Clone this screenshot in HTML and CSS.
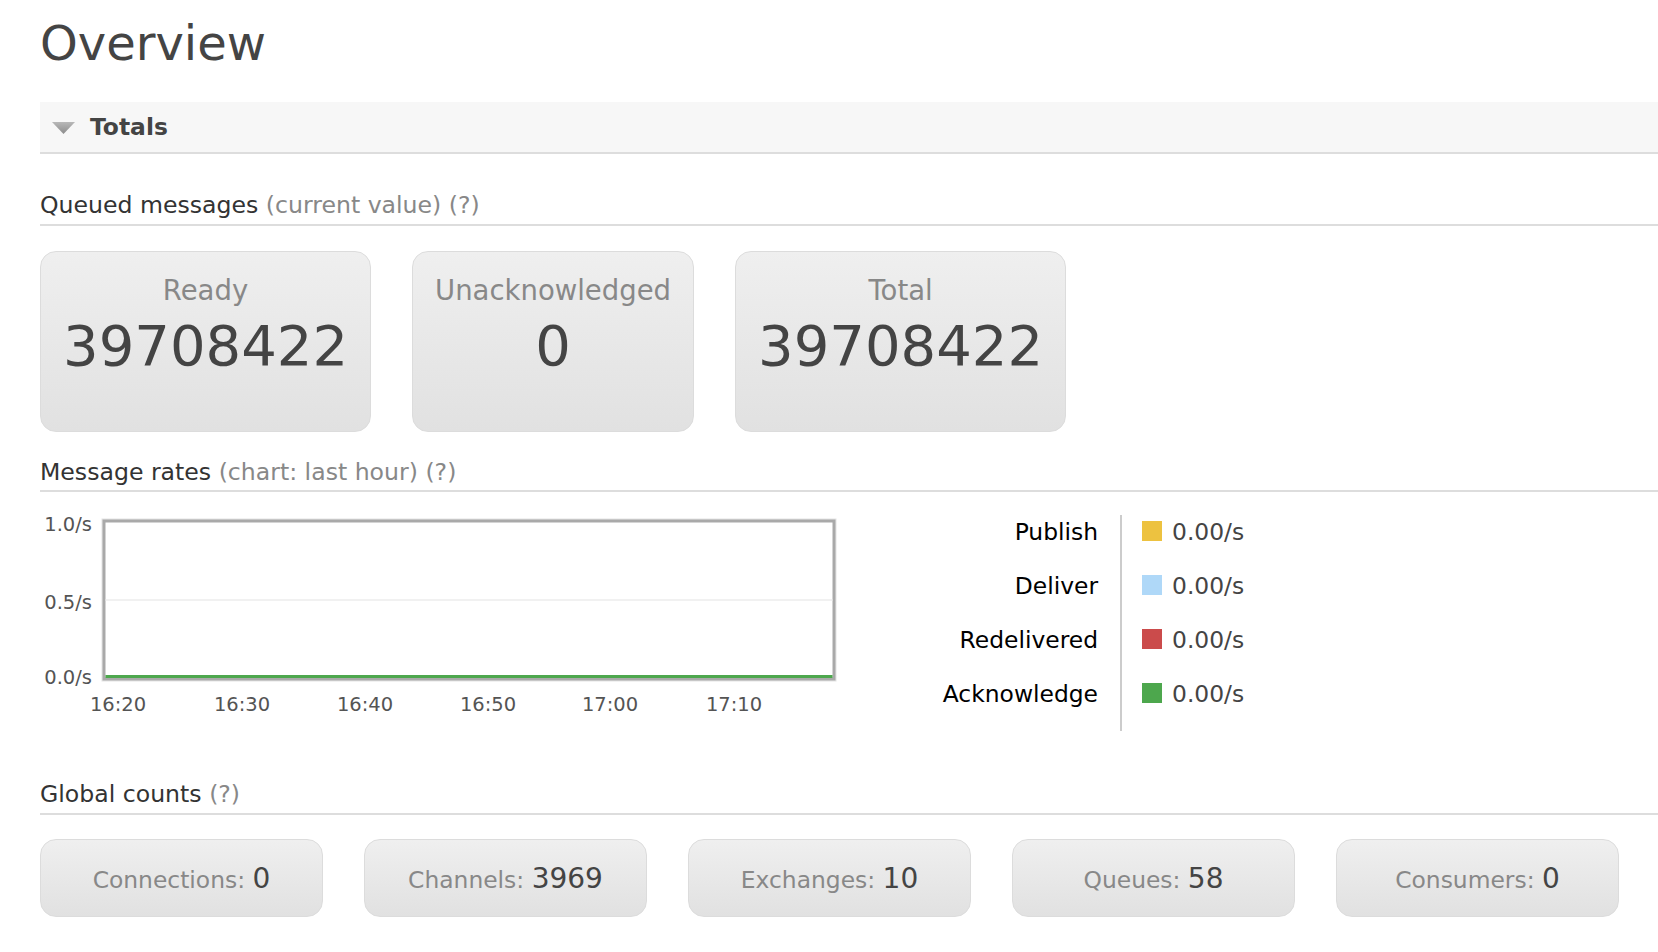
FILE: index.html
```html
<!DOCTYPE html>
<html lang="en">
<head>
<meta charset="utf-8">
<title>Overview</title>
<link rel="stylesheet" href="styles.css">
</head>
<body>
<div class="page">
  <h1 class="title">Overview</h1>
  <div class="section">
    <div class="section-bar">
      <svg class="toggle" width="23" height="12" viewBox="0 0 23 12" aria-hidden="true">
        <defs>
          <linearGradient id="tg" x1="0" y1="0" x2="0" y2="1">
            <stop offset="0" stop-color="#b8b8b8"/>
            <stop offset="1" stop-color="#8c8c8c"/>
          </linearGradient>
        </defs>
        <polygon points="0,0 23,0 11.5,12" fill="url(#tg)"/>
      </svg>
      <h2 class="section-title">Totals</h2>
    </div>

    <h3 class="sub">Queued messages <span class="muted">(current value) (?)</span></h3>
    <div class="highlights">
      <div class="hl"><span class="hl-label">Ready</span><strong class="hl-num">39708422</strong></div>
      <div class="hl"><span class="hl-label">Unacknowledged</span><strong class="hl-num">0</strong></div>
      <div class="hl"><span class="hl-label">Total</span><strong class="hl-num">39708422</strong></div>
    </div>

    <h3 class="sub sub-rates">Message rates <span class="muted">(chart: last hour) (?)</span></h3>
    <div class="rates">
      <svg class="chart" width="800" height="215" viewBox="0 0 800 215">
        <rect x="64" y="17" width="730" height="158" fill="#fff" stroke="#e4e4e4" stroke-width="5"/>
        <rect x="64" y="17" width="730" height="158" fill="#fff" stroke="#a9a9a9" stroke-width="3"/>
        <line x1="65.5" y1="96" x2="792.5" y2="96" class="grid"/>
        <line x1="65.5" y1="172.5" x2="792.5" y2="172.5" class="series"/>
        <g class="ylabels">
          <text x="52" y="27">1.0/s</text>
          <text x="52" y="105">0.5/s</text>
          <text x="52" y="180">0.0/s</text>
        </g>
        <g class="xlabels">
          <text x="78" y="207">16:20</text>
          <text x="202" y="207">16:30</text>
          <text x="325" y="207">16:40</text>
          <text x="448" y="207">16:50</text>
          <text x="570" y="207">17:00</text>
          <text x="694" y="207">17:10</text>
        </g>
      </svg>
      <div class="legend">
        <div class="legend-label">Publish</div>
        <div class="legend-value"><span class="swatch swatch-publish"></span>0.00/s</div>
        <div class="legend-label">Deliver</div>
        <div class="legend-value"><span class="swatch swatch-deliver"></span>0.00/s</div>
        <div class="legend-label">Redelivered</div>
        <div class="legend-value"><span class="swatch swatch-redeliver"></span>0.00/s</div>
        <div class="legend-label">Acknowledge</div>
        <div class="legend-value"><span class="swatch swatch-ack"></span>0.00/s</div>
      </div>
    </div>

    <h3 class="sub sub-global">Global counts <span class="muted">(?)</span></h3>
    <div class="counts">
      <div class="count"><span class="count-text">Connections: <strong class="count-num">0</strong></span></div>
      <div class="count"><span class="count-text">Channels: <strong class="count-num">3969</strong></span></div>
      <div class="count"><span class="count-text">Exchanges: <strong class="count-num">10</strong></span></div>
      <div class="count"><span class="count-text">Queues: <strong class="count-num">58</strong></span></div>
      <div class="count"><span class="count-text">Consumers: <strong class="count-num">0</strong></span></div>
    </div>
  </div>
</div>
</body>
</html>
```

FILE: styles.css
```css
html, body {
  margin: 0;
  padding: 0;
  background: #fff;
}

body {
  font-family: "DejaVu Sans", Verdana, sans-serif;
  font-size: 23.4px;
  color: #444;
  overflow-x: hidden;
}

.page {
  padding: 0 0 0 40px;
}

.title {
  margin: 0;
  padding-top: 19px;
  font-size: 48px;
  line-height: 48px;
  font-weight: normal;
  color: #444;
}

.section-bar {
  margin-top: 35px;
  height: 50px;
  background: #f7f7f7;
  border-bottom: 2px solid #ddd;
  display: flex;
  align-items: center;
  padding-left: 12px;
}

.toggle {
  display: block;
  margin-right: 15px;
  margin-top: 2px;
}

.section-title {
  margin: 0;
  font-size: 23.4px;
  font-weight: bold;
  line-height: 28px;
  color: #444;
}

.sub {
  margin: 37px 0 0;
  font-size: 23.6px;
  font-weight: normal;
  line-height: 28px;
  padding-bottom: 5px;
  border-bottom: 2px solid #ddd;
  color: #333;
}

.sub-rates {
  margin-top: 26px;
  padding-bottom: 4px;
}

.sub-global {
  margin-top: 49px;
}

.muted {
  color: #888;
}

/* queued message highlights */
.highlights {
  display: flex;
  gap: 41px;
  margin-top: 25px;
}

.hl {
  display: flex;
  flex-direction: column;
  text-align: center;
  padding: 21px 22px 57px;
  border: 1px solid #dcdcdc;
  border-radius: 16px;
  background: linear-gradient(#efefef, #e1e1e1);
}

.hl-label {
  font-size: 27.5px;
  line-height: 34px;
  color: #888;
}

.hl-num {
  margin-top: 11px;
  font-size: 56px;
  line-height: 56px;
  font-weight: normal;
  color: #444;
}

/* message rates */
.rates {
  display: flex;
  align-items: flex-start;
  margin-top: 12px;
}

.chart {
  display: block;
  flex: none;
}

.chart text {
  font-family: "DejaVu Sans", Verdana, sans-serif;
  font-size: 19.5px;
  fill: #545454;
}

.ylabels text {
  text-anchor: end;
}

.xlabels text {
  text-anchor: middle;
}

.grid {
  stroke: #ececec;
  stroke-width: 1.5;
}

.series {
  stroke: #4da74d;
  stroke-width: 3;
}

.legend {
  display: grid;
  grid-template-columns: 184px auto;
  margin-left: 98px;
  margin-top: 11px;
}

.legend-label {
  height: 54px;
  line-height: 34px;
  padding-right: 22px;
  border-right: 2px solid #ccc;
  text-align: right;
  color: #000;
}

.legend-value {
  display: flex;
  align-items: flex-start;
  height: 54px;
  line-height: 34px;
  padding-left: 20px;
  color: #444;
}

.swatch {
  flex: none;
  width: 20px;
  height: 20px;
  margin-top: 6px;
  margin-right: 10px;
}

.swatch-publish { background: #edc240; }
.swatch-deliver { background: #afd8f8; }
.swatch-redeliver { background: #cb4b4b; }
.swatch-ack { background: #4da74d; }

/* global counts */
.counts {
  display: flex;
  gap: 41px;
  margin-top: 24px;
}

.count {
  box-sizing: border-box;
  width: 283px;
  height: 78px;
  display: flex;
  align-items: center;
  justify-content: center;
  border: 1px solid #dcdcdc;
  border-radius: 16px;
  background: linear-gradient(#efefef, #e1e1e1);
}

.count-text {
  font-size: 23.4px;
  color: #888;
}

.count-num {
  font-size: 28px;
  font-weight: normal;
  color: #444;
}
```
